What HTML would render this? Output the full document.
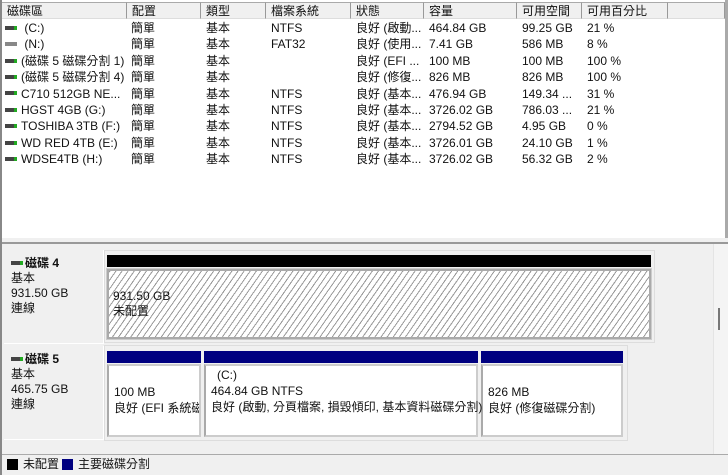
<!DOCTYPE html>
<html><head><meta charset="utf-8"><style>
*{margin:0;padding:0;box-sizing:border-box}
body{width:728px;height:475px;overflow:hidden;background:#fff;font-family:"Liberation Sans","Noto Sans CJK TC",sans-serif;font-size:12px;color:#111;position:relative}
.a{position:absolute;white-space:nowrap}
.hd{position:absolute;top:2px;height:17px;background:#f0f0f0;border-top:1px solid #aaa;border-bottom:1px solid #ddd;border-right:1px solid #999;padding-left:5px;line-height:16px}
.ic{display:inline-block;width:12px;height:4px;background:#444;border-right:3px solid #2a2;vertical-align:middle;margin-right:4px;position:relative;top:-1px}
.hatch{background:repeating-linear-gradient(-55deg,#fff 0 4px,#999 4px 5px)}
</style></head><body>
<div class="a" style="left:0;top:0;width:2px;height:475px;background:#888"></div>
<div class="a" style="left:725px;top:0;width:3px;height:243px;background:#aaa"></div>
<div class="hd" style="left:2px;width:125px">磁碟區</div>
<div class="hd" style="left:127px;width:74px">配置</div>
<div class="hd" style="left:201px;width:65px">類型</div>
<div class="hd" style="left:266px;width:85px">檔案系統</div>
<div class="hd" style="left:351px;width:73px">狀態</div>
<div class="hd" style="left:424px;width:93px">容量</div>
<div class="hd" style="left:517px;width:65px">可用空間</div>
<div class="hd" style="left:582px;width:86px">可用百分比</div>
<div class="hd" style="left:668px;width:57px"></div>
<div class="a" style="left:5px;top:20px;line-height:16.4px">
<div><span class="ic"></span> (C:)</div>
<div><span class="ic" style="background:#888;border-color:#888"></span> (N:)</div>
<div><span class="ic"></span>(磁碟 5 磁碟分割 1)</div>
<div><span class="ic"></span>(磁碟 5 磁碟分割 4)</div>
<div><span class="ic"></span>C710 512GB NE...</div>
<div><span class="ic"></span>HGST 4GB (G:)</div>
<div><span class="ic"></span>TOSHIBA 3TB (F:)</div>
<div><span class="ic"></span>WD RED 4TB (E:)</div>
<div><span class="ic"></span>WDSE4TB (H:)</div>
</div>
<div class="a" style="left:131px;top:20px;line-height:16.4px">簡單<br>簡單<br>簡單<br>簡單<br>簡單<br>簡單<br>簡單<br>簡單<br>簡單</div>
<div class="a" style="left:206px;top:20px;line-height:16.4px">基本<br>基本<br>基本<br>基本<br>基本<br>基本<br>基本<br>基本<br>基本</div>
<div class="a" style="left:271px;top:20px;line-height:16.4px">NTFS<br>FAT32<br><br><br>NTFS<br>NTFS<br>NTFS<br>NTFS<br>NTFS</div>
<div class="a" style="left:356px;top:20px;line-height:16.4px">良好 (啟動...<br>良好 (使用...<br>良好 (EFI ...<br>良好 (修復...<br>良好 (基本...<br>良好 (基本...<br>良好 (基本...<br>良好 (基本...<br>良好 (基本...</div>
<div class="a" style="left:429px;top:20px;line-height:16.4px">464.84 GB<br>7.41 GB<br>100 MB<br>826 MB<br>476.94 GB<br>3726.02 GB<br>2794.52 GB<br>3726.01 GB<br>3726.02 GB</div>
<div class="a" style="left:522px;top:20px;line-height:16.4px">99.25 GB<br>586 MB<br>100 MB<br>826 MB<br>149.34 ...<br>786.03 ...<br>4.95 GB<br>24.10 GB<br>56.32 GB</div>
<div class="a" style="left:587px;top:20px;line-height:16.4px">21 %<br>8 %<br>100 %<br>100 %<br>31 %<br>21 %<br>0 %<br>1 %<br>2 %</div>

<div class="a" style="left:2px;top:238px;width:726px;height:6px;background:#f0f0f0;border-bottom:2px solid #999"></div>
<div class="a" style="left:2px;top:244px;width:726px;height:211px;background:#f0f0f0"></div>
<div class="a" style="left:713px;top:244px;width:15px;height:211px;background:#f4f4f4;border-left:1px solid #e4e4e4"></div>
<div class="a" style="left:718px;top:308px;width:2px;height:22px;background:#777"></div>

<div class="a" style="left:4px;top:250px;width:100px;height:94px;background:#f0f0f0;border-right:1px solid #fff;border-bottom:1px solid #fff;line-height:15px;padding:6px 0 0 7px"><span class="ic" style="margin-right:2px"></span><b style="font-weight:bold">磁碟 4</b><br>基本<br>931.50 GB<br>連線</div>
<div class="a" style="left:104px;top:250px;width:551px;height:93px;border:1px solid #ddd;background:#f0f0f0"></div>
<div class="a" style="left:107px;top:255px;width:544px;height:12px;background:#000"></div>
<div class="a hatch" style="left:107px;top:269px;width:544px;height:70px;border:2px solid #aaa;outline:1px solid #ccc"></div>
<div class="a" style="left:113px;top:289px;line-height:15px">931.50 GB<br>未配置</div>

<div class="a" style="left:4px;top:346px;width:100px;height:94px;background:#f0f0f0;border-right:1px solid #fff;border-bottom:1px solid #fff;line-height:15px;padding:6px 0 0 7px"><span class="ic" style="margin-right:2px"></span><b style="font-weight:bold">磁碟 5</b><br>基本<br>465.75 GB<br>連線</div>
<div class="a" style="left:104px;top:345px;width:524px;height:96px;border:1px solid #ddd;background:#f0f0f0"></div>
<div class="a" style="left:107px;top:351px;width:94px;height:12px;background:#000080"></div>
<div class="a" style="left:204px;top:351px;width:274px;height:12px;background:#000080"></div>
<div class="a" style="left:481px;top:351px;width:142px;height:12px;background:#000080"></div>
<div class="a" style="left:107px;top:364px;width:94px;height:73px;background:#fff;border:2px solid #ccc;border-left-color:#aaa"></div>
<div class="a" style="left:204px;top:364px;width:274px;height:73px;background:#fff;border:2px solid #ccc;border-left-color:#aaa"></div>
<div class="a" style="left:481px;top:364px;width:142px;height:73px;background:#fff;border:2px solid #ccc;border-left-color:#aaa"></div>
<div class="a" style="left:114px;top:384px;line-height:16px;width:85px;overflow:hidden">100 MB<br>良好 (EFI 系統磁碟</div>
<div class="a" style="left:211px;top:367px;line-height:16px"><span style="padding-left:6px">(C:)</span><br>464.84 GB NTFS<br>良好 (啟動, 分頁檔案, 損毀傾印, 基本資料磁碟分割)</div>
<div class="a" style="left:488px;top:384px;line-height:16px">826 MB<br>良好 (修復磁碟分割)</div>

<div class="a" style="left:2px;top:454px;width:726px;height:1px;background:#aaa"></div>
<div class="a" style="left:2px;top:455px;width:726px;height:20px;background:#f0f0f0"></div>
<div class="a" style="left:7px;top:459px;width:11px;height:11px;background:#000"></div>
<div class="a" style="left:23px;top:457px;line-height:15px">未配置</div>
<div class="a" style="left:62px;top:459px;width:11px;height:11px;background:#000080"></div>
<div class="a" style="left:78px;top:457px;line-height:15px">主要磁碟分割</div>
</body></html>
